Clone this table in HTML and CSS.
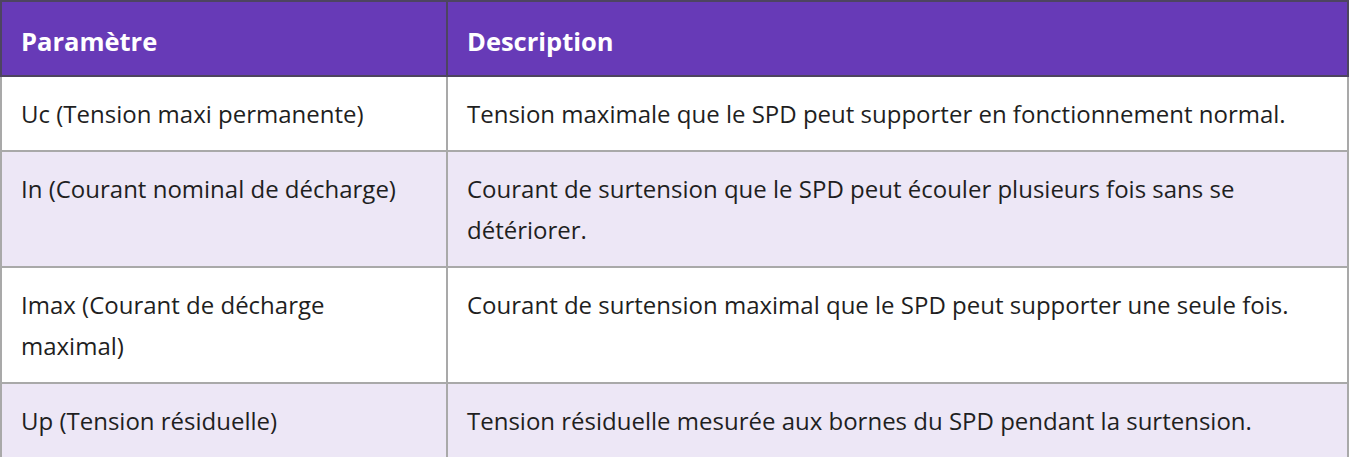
FILE: index.html
```html
<!DOCTYPE html>
<html lang="fr">
<head>
<meta charset="utf-8">
<title>Paramètres SPD</title>
<link rel="stylesheet" href="styles.css">
</head>
<body>
<table class="spec-table">
  <thead>
    <tr>
      <th class="col-param">Paramètre</th>
      <th>Description</th>
    </tr>
  </thead>
  <tbody>
    <tr>
      <td>Uc (Tension maxi permanente)</td>
      <td>Tension maximale que le SPD peut supporter en fonctionnement normal.</td>
    </tr>
    <tr>
      <td>In (Courant nominal de décharge)</td>
      <td>Courant de surtension que le SPD peut écouler plusieurs fois sans se détériorer.</td>
    </tr>
    <tr>
      <td>Imax (Courant de décharge maximal)</td>
      <td>Courant de surtension maximal que le SPD peut supporter une seule fois.</td>
    </tr>
    <tr>
      <td>Up (Tension résiduelle)</td>
      <td>Tension résiduelle mesurée aux bornes du SPD pendant la surtension.</td>
    </tr>
  </tbody>
</table>
</body>
</html>
```

FILE: styles.css
```css
html, body {
  margin: 0;
  padding: 0;
  background: #ffffff;
}

.spec-table {
  width: 1349px;
  border-collapse: collapse;
  table-layout: fixed;
  font-family: "Open Sans", "Noto Sans", sans-serif;
  font-size: 24px;
  line-height: 41px;
  color: #1f1f1f;
}

.spec-table th,
.spec-table td {
  box-sizing: border-box;
  text-align: left;
  vertical-align: top;
  padding: 16px 20px 16px 19px;
  border: 2px solid #a9a9a9;
}

.col-param {
  width: 446px;
}

.spec-table th {
  background: #673ab7;
  color: #ffffff;
  font-weight: 700;
  font-size: 25.5px;
  padding-top: 19px;
  padding-bottom: 13px;
  border-color: #4d4460;
}

.spec-table tbody tr:nth-child(even) td {
  background: #ede7f6;
}
```
